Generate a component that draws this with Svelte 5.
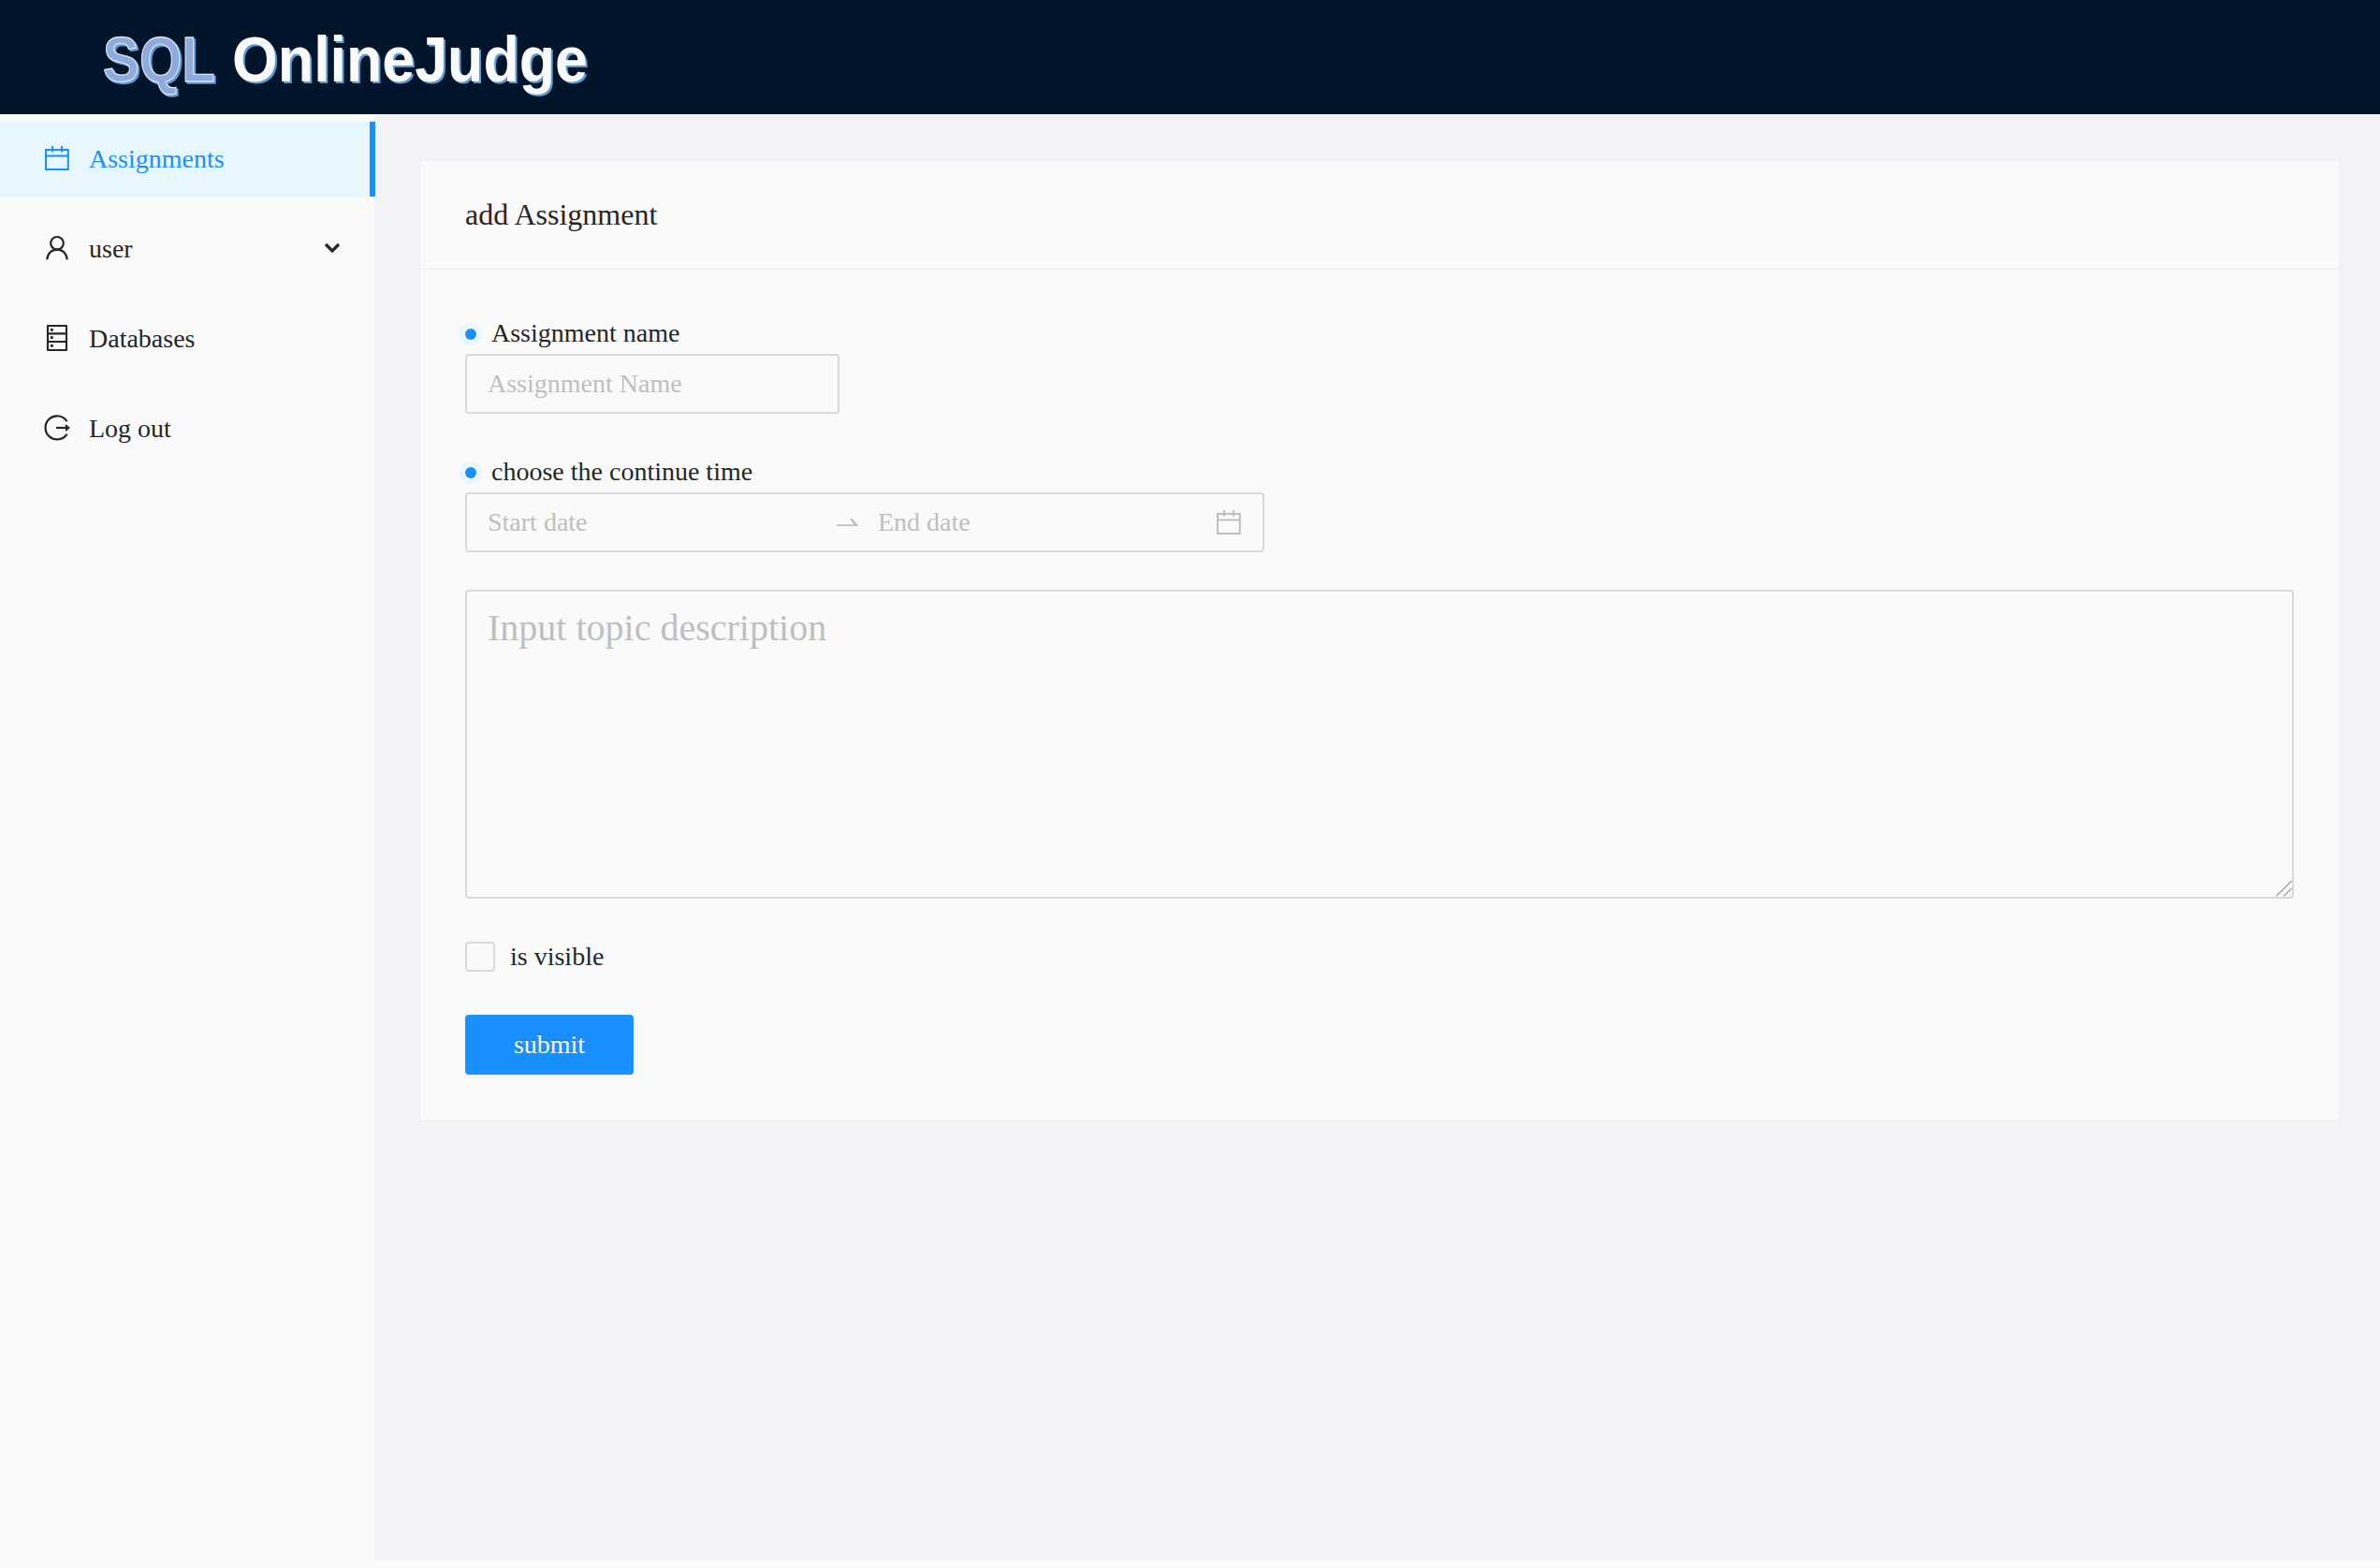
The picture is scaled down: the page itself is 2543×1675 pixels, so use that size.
<script>
  const menu = [
    { label: 'Assignments', icon: 'calendar', active: true },
    { label: 'user', icon: 'user', expandable: true },
    { label: 'Databases', icon: 'database' },
    { label: 'Log out', icon: 'logout' }
  ];
  let name = $state('');
  let start = $state('');
  let end = $state('');
  let description = $state('');
  let visible = $state(false);
</script>

{#snippet calendar()}
  <path d="M2 6h23.800v21H2zM2 12.500h23.800" stroke-width="2" />
  <path d="M9 2v6.600M19 2v6.600" stroke-width="2" />
{/snippet}

<div class="page">
  <header>
    <svg class="logo" width="560" height="122" viewBox="0 0 560 122" role="img" aria-label="SQL OnlineJudge">
      <text class="sql" x="10" y="87" textLength="120" lengthAdjust="spacingAndGlyphs">SQL</text>
      <text class="judge" x="148" y="87" textLength="380" lengthAdjust="spacingAndGlyphs">OnlineJudge</text>
    </svg>
  </header>

  <div class="body">
    <nav>
      {#each menu as item}
        <div class="item" class:active={item.active}>
          <svg class="icon" width="28" height="28" viewBox="0 0 28 28">
            {#if item.icon === 'calendar'}
              {@render calendar()}
            {:else if item.icon === 'user'}
              <circle cx="14" cy="9.800" r="6.800" stroke-width="2.200" />
              <path d="M3.300 27.300C3.700 20.800 8 16.600 14 16.600s10.300 4.200 10.700 10.700" stroke-width="2.200" />
            {:else if item.icon === 'database'}
              <path d="M4 2h20v26H4zM4 10.400h20M4 19h20" stroke-width="2.100" stroke-linejoin="round" />
              <path d="M7 6.300h2.800M7 14.700h2.800M7 23.300h2.800" stroke-width="2.800" />
            {:else}
              <path d="M24.600 8.200A12.500 12.500 0 1 0 24.600 21.600" stroke-width="2.200" />
              <path d="M13 15h11" stroke-width="2.200" />
              <path class="fill" d="M23 11 28 15l-5 4z" />
            {/if}
          </svg>
          <span>{item.label}</span>
          {#if item.expandable}
            <svg class="chevron" width="18" height="12" viewBox="0 0 18 12"><path d="M2 2l7 7 7-7" stroke-width="3.300" /></svg>
          {/if}
        </div>
      {/each}
    </nav>

    <main>
      <section class="card">
        <h1>add Assignment</h1>
        <form onsubmit={(e) => e.preventDefault()}>
          <label for="name"><i class="dot"></i>Assignment name</label>
          <input id="name" class="box name" placeholder="Assignment Name" bind:value={name} />

          <label class="second" for="start"><i class="dot"></i>choose the continue time</label>
          <div class="box range">
            <input id="start" placeholder="Start date" bind:value={start} />
            <svg class="arrow" width="26" height="12" viewBox="0 0 26 12"><path d="M0 8.200h18.300L14 2h2.600L23 9.300q.5.800-.5.800H0z" /></svg>
            <input placeholder="End date" bind:value={end} />
            <svg class="icon" width="28" height="28" viewBox="0 0 28 28">{@render calendar()}</svg>
          </div>

          <div class="area">
            <textarea class="box" placeholder="Input topic description" bind:value={description}></textarea>
            <svg class="grip" width="17" height="17" viewBox="0 0 17 17"><path d="M0 16.500 16.500 0M8 16.500 16.500 8" /></svg>
          </div>

          <label class="check"><input type="checkbox" bind:checked={visible} />is visible</label>
          <button type="submit">submit</button>
        </form>
      </section>
    </main>
  </div>
</div>

<style>
  :global(body) { background: #fafafa; }
  * { box-sizing: border-box; }
  .page {
    height: 1666px;
    display: flex;
    flex-direction: column;
    font: 28px 'Liberation Serif', 'Times New Roman', serif;
    color: #262626;
  }
  header { flex: 0 0 122px; background: #001529; padding-left: 100px; }
  .logo { display: block; font: bold 68px 'Liberation Sans', Arial, sans-serif; filter: drop-shadow(2px 2px 0 #5b9bd5); }
  .sql { fill: #8faadc; stroke: #dce4f3; stroke-width: 1.3px; }
  .judge { fill: #fafafa; }
  .body { flex: 1; display: flex; min-height: 0; }
  nav {
    flex: 0 0 400px;
    min-width: 0;
    padding-top: 8px;
    display: flex;
    flex-direction: column;
    gap: 16px;
    background: #fafafa;
  }
  .item {
    position: relative;
    height: 80px;
    width: 401px;
    display: flex;
    align-items: center;
    padding: 0 37px 0 47px;
    gap: 20px;
  }
  .item.active { background: #e6f7ff; color: #1890ff; border-right: 6px solid #1890ff; }
  .icon { flex: none; fill: none; stroke: currentColor; overflow: visible; }
  .item .icon { margin-top: -4px; }
  .fill { fill: currentColor; stroke: none; }
  .chevron { margin-left: auto; margin-top: -2px; fill: none; stroke: currentColor; }
  main { flex: 1; min-width: 0; background: #f1f3f6; padding: 49px 43px 0 48px; }
  .card { height: 1027px; background: #fafafa; border: 1px solid #f0f0f0; border-bottom-color: #ebebeb; }
  h1 {
    margin: 0;
    height: 116px;
    padding-left: 48px;
    font-size: 32px;
    font-weight: 400;
    line-height: 115px;
    border-bottom: 1px solid #ececec;
  }
  form { padding: 46px 48px 0; display: flex; flex-direction: column; align-items: flex-start; }
  label { display: flex; align-items: center; height: 44px; line-height: 44px; }
  .dot {
    width: 12px;
    height: 12px;
    margin: 2px 16px 0 0;
    border-radius: 50%;
    background: #1890ff;
    box-shadow: 0 0 0 3px #f0f9ff, 0 0 0 6px #e6f7ff;
  }
  .box { border: 2px solid #d9d9d9; border-radius: 4px; background: #fafafa; }
  input, textarea, button { font: inherit; color: inherit; margin: 0; outline: none; }
  input::placeholder, textarea::placeholder { color: #bfbfbf; opacity: 1; }
  .name { width: 400px; height: 64px; padding: 0 22px; }
  .second { margin-top: 40px; }
  .range { width: 854px; height: 64px; padding: 0 22px; display: flex; align-items: center; }
  .range input { border: 0; padding: 0; background: transparent; width: 357px; height: 58px; }
  .arrow { flex: none; margin: 0 18px 0 16px; fill: #bfbfbf; }
  .range input + .icon { margin-left: auto; color: #bfbfbf; margin-top: -2px; }
  .area { position: relative; width: 1954px; height: 330px; margin-top: 40px; }
  textarea { display: block; width: 100%; height: 100%; resize: none; font-size: 40px; line-height: 62px; padding: 8px 22px; }
  .grip { position: absolute; right: 2px; bottom: 2px; fill: none; stroke: #555; stroke-width: 1; }
  .check { margin-top: 40px; }
  .check input { appearance: none; width: 32px; height: 32px; margin-right: 16px; border: 2px solid #d9d9d9; border-radius: 4px; }
  button {
    margin-top: 40px;
    width: 180px;
    height: 64px;
    padding: 0;
    border: 0;
    border-radius: 4px;
    background: #1890ff;
    color: #fafafa;
    text-shadow: 0 -2px 0 rgba(0, 0, 0, 0.12);
    box-shadow: 0 4px 0 rgba(0, 0, 0, 0.02);
  }
</style>
